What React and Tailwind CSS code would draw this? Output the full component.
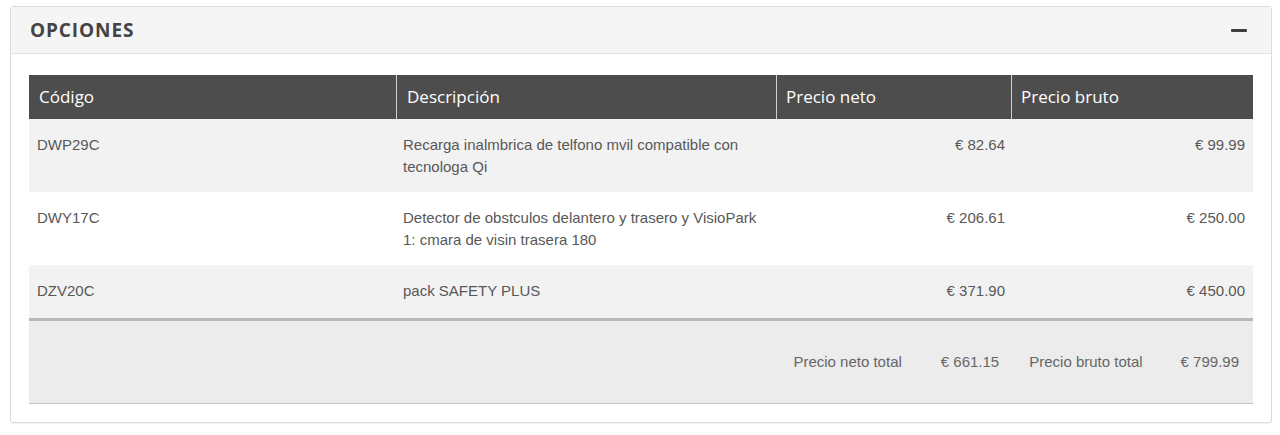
import React from "react";

const rows = [
  { code: "DWP29C", desc: ["Recarga inalmbrica de telfono mvil compatible con", "tecnologa Qi"], neto: "€ 82.64", bruto: "€ 99.99", bg: "bg-[#f2f2f2]", h: "h-[73px]" },
  { code: "DWY17C", desc: ["Detector de obstculos delantero y trasero y VisioPark", "1: cmara de visin trasera 180"], neto: "€ 206.61", bruto: "€ 250.00", bg: "bg-white", h: "h-[73px]" },
  { code: "DZV20C", desc: ["pack SAFETY PLUS"], neto: "€ 371.90", bruto: "€ 450.00", bg: "bg-[#f2f2f2]", h: "h-[53px]" },
];

export default function App() {
  return (
    <div className="w-[1280px] h-[435px] bg-white pt-[6px] pl-[10px]">
      <div className="w-[1262px] h-[417px] border border-[#dcdcdc] rounded-[3px] shadow-[0_1px_2px_rgba(0,0,0,0.06)] bg-white">
        <div className="h-[47px] bg-[#f5f5f5] border-b border-[#e2e2e2] flex items-center justify-between pl-[19px] pr-[24px]">
          <span className="font-['Open_Sans',sans-serif] font-bold text-[19px] text-[#444] tracking-[0.9px]">OPCIONES</span>
          <span className="block w-[16px] h-[3px] rounded-[1px] bg-[#3d3d3d]"></span>
        </div>
        <div className="px-[18px] pt-[21px]">
          <div className="grid grid-cols-[368px_380px_235px_240px] h-[44px] bg-[#4d4d4d] font-['Open_Sans',sans-serif] text-[17px] text-white items-center">
            <div className="h-full flex items-center pl-[10px] border-r border-[#d0d0d0]">Código</div>
            <div className="h-full flex items-center pl-[10px] border-r border-[#d0d0d0]">Descripción</div>
            <div className="h-full flex items-center pl-[9px] border-r border-[#d0d0d0]">Precio neto</div>
            <div className="h-full flex items-center pl-[9px]">Precio bruto</div>
          </div>
          {rows.map((r) => (
            <div key={r.code} className={`grid grid-cols-[368px_380px_235px_240px] ${r.h} ${r.bg} font-['Liberation_Sans',Arial,sans-serif] text-[15px] leading-[22px] text-[#585858]`}>
              <div className="pl-[8px] pt-[15px]">{r.code}</div>
              <div className="pl-[6px] pt-[15px]">
                {r.desc.map((d) => (
                  <div key={d}>{d}</div>
                ))}
              </div>
              <div className="pr-[7px] pt-[15px] text-right">{r.neto}</div>
              <div className="pr-[7px] pt-[15px] text-right">{r.bruto}</div>
            </div>
          ))}
          <div className="h-[3px] bg-[#b4b9be]"></div>
          <div className="h-[83px] bg-[#ececec] border-b border-[#c4c4c4] flex items-center justify-end pr-[14px] font-['Liberation_Sans',Arial,sans-serif] text-[15px] text-[#666]">
            <span>Precio neto total</span>
            <span className="ml-[39px]">€ 661.15</span>
            <span className="ml-[30px]">Precio bruto total</span>
            <span className="ml-[38px]">€ 799.99</span>
          </div>
        </div>
      </div>
    </div>
  );
}
